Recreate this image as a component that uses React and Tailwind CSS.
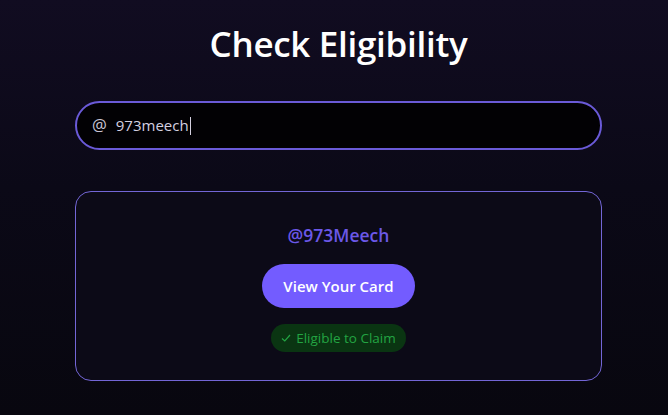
export default function App() {
  return (
    <div
      className="w-[668px] h-[415px] overflow-hidden bg-[linear-gradient(180deg,#110c21_0%,#0b0917_45%,#08070f_100%)] flex flex-col items-center pl-[9px]"
      style={{ fontFamily: '"Open Sans", "Noto Sans", sans-serif' }}
    >
      <h1 className="mt-[20px] text-[35px] leading-[48px] font-semibold text-white tracking-[-0.3px]">
        Check Eligibility
      </h1>
      <div className="mt-[33px] w-[527px] h-[49px] rounded-full border-2 border-[#6a5ad8] bg-[#020104] flex items-center pl-[15px]">
        <span className="text-[#c9c5d6] text-[16.5px] mr-[9px]">@</span>
        <span className="text-[#d4d0e0] text-[15px]">973meech</span>
        <span className="w-px h-[18px] bg-[#d4d0e0] ml-[1px]"></span>
      </div>
      <div className="mt-[41px] w-[527px] h-[190px] rounded-[16px] border border-[#7366d6] bg-[#0c0a17] flex flex-col items-center">
        <div className="mt-[31px] text-[#6b58e8] text-[17.5px] font-semibold leading-[24px]">@973Meech</div>
        <button className="mt-[17px] w-[153px] h-[44px] rounded-full bg-[#735cff] text-white text-[15px] font-semibold">
          View Your Card
        </button>
        <div className="mt-[16px] h-[28px] px-[10px] rounded-full bg-[#0a3512] flex items-center gap-[5px] text-[#23a443] text-[13.5px]">
          <svg width="10" height="10" viewBox="0 0 10 10" fill="none" stroke="#23a443" strokeWidth="1.2">
            <path d="M1 5.5 L3.8 8 L9 2" />
          </svg>
          <span>Eligible to Claim</span>
        </div>
      </div>
    </div>
  );
}
